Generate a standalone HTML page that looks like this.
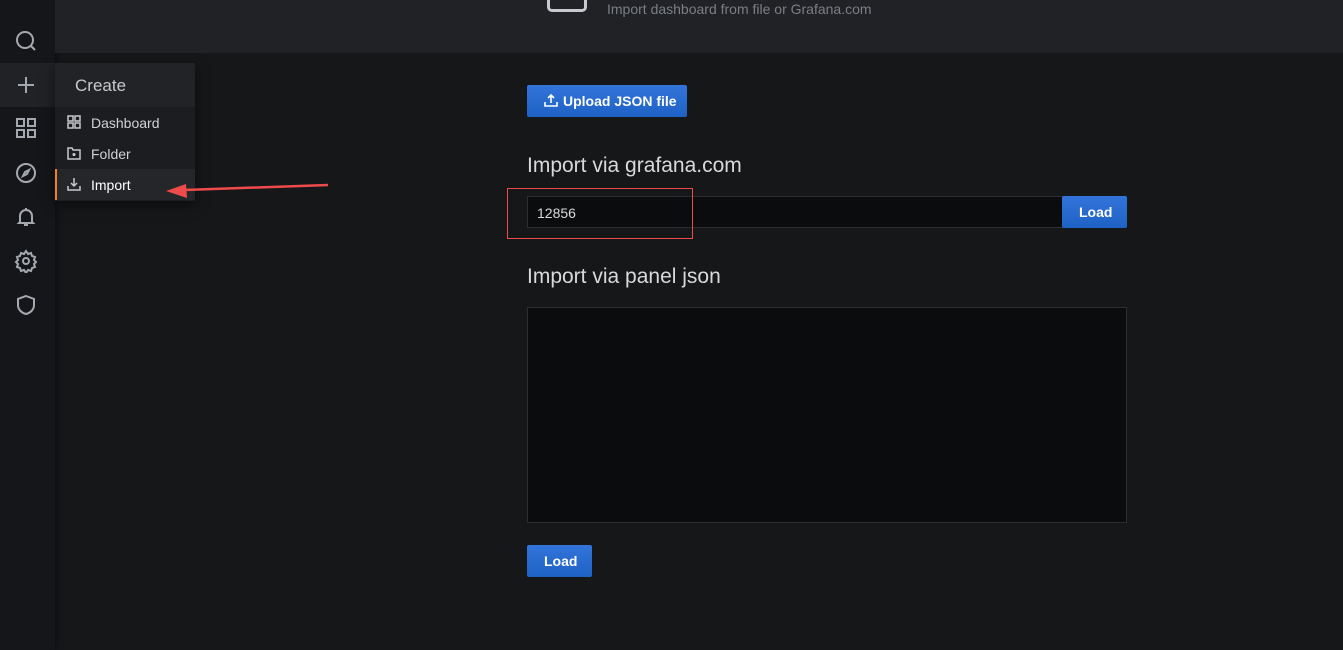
<!DOCTYPE html>
<html><head><meta charset="utf-8"><style>
*{box-sizing:border-box;margin:0;padding:0}
body{width:1343px;height:650px;overflow:hidden;background:#161719;font-family:"Liberation Sans",Arial,sans-serif;position:relative}
.side{position:absolute;left:0;top:0;width:55px;height:650px;background:#141619;box-shadow:2px 0 6px rgba(0,0,0,.4)}
.hdr{position:absolute;left:55px;top:0;right:0;height:53px;background:#202226}
.ico{position:absolute;left:14px;width:24px;height:24px}
.menu{position:absolute;left:55px;top:63px;width:140px;height:138px;background:#1c1d21;box-shadow:0 4px 12px rgba(0,0,0,.5)}
.mh{height:44px;background:#222327;color:#c7c9ce;font-size:17px;padding:13px 0 0 20px}
.mi{height:31px;color:#d0d2d6;font-size:14px;padding:8px 0 0 36px;position:relative}
.mi svg{position:absolute;left:12px;top:8px}
.btn{position:absolute;background:linear-gradient(#3274d9,#1f62c6);color:#fff;font-weight:bold;font-size:14px;border-radius:2px}
h2{position:absolute;font-weight:normal;color:#d8d9da;font-size:21px}
</style></head><body>
<div class="side">
<svg class="ico" style="top:29px" viewBox="0 0 24 24" fill="none" stroke="#a5a8ae" stroke-width="2"><circle cx="11" cy="11" r="8"/><path d="M17 17l4 4"/></svg>
<div style="position:absolute;left:0;top:63px;width:55px;height:44px;background:#202226"></div>
<svg class="ico" style="top:73px" viewBox="0 0 24 24" fill="none" stroke="#a5a8ae" stroke-width="2"><path d="M12 4v16M4 12h16"/></svg>
<svg class="ico" style="top:116px" viewBox="0 0 24 24" fill="none" stroke="#a5a8ae" stroke-width="2"><rect x="3" y="3" width="7" height="7"/><rect x="14" y="3" width="7" height="7"/><rect x="3" y="14" width="7" height="7"/><rect x="14" y="14" width="7" height="7"/></svg>
<svg class="ico" style="top:161px" viewBox="0 0 24 24" fill="none" stroke="#a5a8ae" stroke-width="2"><circle cx="12" cy="12" r="9"/><path d="M15 9l-2 4-4 2 2-4z"/></svg>
<svg class="ico" style="top:205px" viewBox="0 0 24 24" fill="none" stroke="#a5a8ae" stroke-width="2"><path d="M6 17V11a6 6 0 0112 0v6l1 1H5zM10 20h4M12 3v2"/></svg>
<svg class="ico" style="top:249px" viewBox="0 0 24 24" fill="none" stroke="#a5a8ae" stroke-width="2"><circle cx="12" cy="12" r="3"/><path d="M12 2l2 3 3-1 1 3 3 1-1 3 2 2-2 2 1 3-3 1-1 3-3-1-2 3-2-3-3 1-1-3-3-1 1-3-2-2 2-2-1-3 3-1 1-3 3 1z"/></svg>
<svg class="ico" style="top:293px" viewBox="0 0 24 24" fill="none" stroke="#a5a8ae" stroke-width="2"><path d="M12 3l8 3v6c0 5-4 8-8 9-4-1-8-4-8-9V6z"/></svg>
</div>
<div class="hdr">
<div style="position:absolute;left:492px;top:-10px;width:40px;height:22px;border:3px solid #c7c9ce;border-radius:5px"></div>
<div style="position:absolute;left:552px;top:1px;color:#7b7e85;font-size:14px">Import dashboard from file or Grafana.com</div>
</div>
<div class="menu">
<div class="mh">Create</div>
<div class="mi"><svg width="14" height="14" viewBox="0 0 14 14" fill="none" stroke="#c7c9ce" stroke-width="1.5"><rect x="1" y="1" width="5" height="5"/><rect x="8" y="1" width="5" height="5"/><rect x="1" y="8" width="5" height="5"/><rect x="8" y="8" width="5" height="5"/></svg>Dashboard</div>
<div class="mi"><svg width="14" height="14" viewBox="0 0 14 14" fill="none" stroke="#c7c9ce" stroke-width="1.5"><path d="M1 2h4l1 2h7v9H1z"/><circle cx="7" cy="8.5" r=".8" fill="#c7c9ce"/></svg>Folder</div>
<div class="mi" style="background:#24262a;border-left:2px solid #f5821f;color:#fff;padding-left:34px"><svg width="14" height="14" viewBox="0 0 14 14" fill="none" stroke="#c7c9ce" stroke-width="1.5" style="left:10px"><path d="M7 1v8M4 6l3 3 3-3M1 9v4h12V9"/></svg>Import</div>
</div>
<svg style="position:absolute;left:160px;top:178px" width="172" height="20"><path d="M168 7L24 12" stroke="#f04b4b" stroke-width="2.5"/><path d="M6 13L26 6 27 20z" fill="#f04b4b"/></svg>
<div class="btn" style="left:527px;top:85px;width:160px;height:32px;padding:8px 0 0 36px"><svg style="position:absolute;left:17px;top:8px" width="14" height="14" viewBox="0 0 14 14" fill="none" stroke="#fff" stroke-width="1.6"><path d="M7 10V2M4 5l3-3 3 3M1 9v4h12V9"/></svg>Upload JSON file</div>
<h2 style="left:527px;top:154px">Import via grafana.com</h2>
<div style="position:absolute;left:527px;top:196px;width:536px;height:32px;background:#0b0c0e;border:1px solid #2c2e33;color:#d8d9da;font-size:14px;padding:8px 0 0 9px">12856</div>
<div class="btn" style="left:1062px;top:196px;width:65px;height:32px;padding:8px 0 0 17px">Load</div>
<div style="position:absolute;left:507px;top:188px;width:186px;height:51px;border:1.5px solid #f04b4b"></div>
<h2 style="left:527px;top:265px">Import via panel json</h2>
<div style="position:absolute;left:527px;top:307px;width:600px;height:216px;background:#0b0c0e;border:1px solid #2c2e33"></div>
<div class="btn" style="left:527px;top:545px;width:65px;height:32px;padding:8px 0 0 17px">Load</div>
</body></html>
